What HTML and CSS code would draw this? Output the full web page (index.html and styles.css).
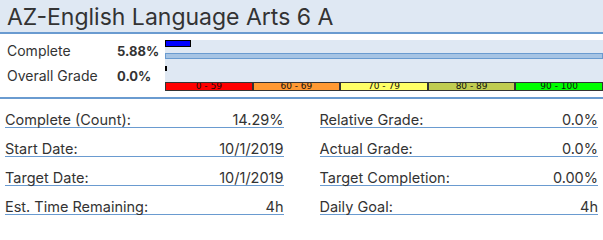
FILE: index.html
```html
<!DOCTYPE html>
<html>
<head>
<meta charset="utf-8">
<link rel="stylesheet" href="styles.css">
</head>
<body>
<div class="card">
  <div class="header">AZ-English Language Arts 6 A</div>
  <div class="summary">
    <div class="summary-labels">
      <div class="srow"><span class="slabel">Complete</span><span class="svalue">5.88%</span></div>
      <div class="srow"><span class="slabel">Overall Grade</span><span class="svalue">0.0%</span></div>
    </div>
    <div class="bars">
      <div class="bar-complete" style="width:5.88%"></div>
      <div class="bar-track"></div>
      <div class="bar-grade"></div>
      <div class="scale">
        <div class="seg seg-red">0 - 59</div>
        <div class="seg seg-orange">60 - 69</div>
        <div class="seg seg-yellow">70 - 79</div>
        <div class="seg seg-olive">80 - 89</div>
        <div class="seg seg-green">90 - 100</div>
      </div>
    </div>
  </div>
  <div class="details">
    <div class="drow"><span>Complete (Count):</span><span>14.29%</span></div>
    <div class="drow"><span>Relative Grade:</span><span>0.0%</span></div>
    <div class="drow"><span>Start Date:</span><span>10/1/2019</span></div>
    <div class="drow"><span>Actual Grade:</span><span>0.0%</span></div>
    <div class="drow"><span>Target Date:</span><span>10/1/2019</span></div>
    <div class="drow"><span>Target Completion:</span><span>0.00%</span></div>
    <div class="drow"><span>Est. Time Remaining:</span><span>4h</span></div>
    <div class="drow"><span>Daily Goal:</span><span>4h</span></div>
  </div>
</div>
</body>
</html>
```

FILE: styles.css
```css
html, body {
  margin: 0;
  padding: 0;
  background: #ffffff;
}
body {
  font-family: Inter, "Noto Sans", sans-serif;
  color: #333333;
  width: 603px;
  overflow: hidden;
}
.header {
  box-sizing: border-box;
  height: 34px;
  padding: 2px 0 0 7px;
  font-size: 23px;
  line-height: 30px;
  background: #dfe8f3;
  border-bottom: 2px solid #6a9bd0;
  white-space: nowrap;
}
.summary {
  display: flex;
  height: 63px;
  border-bottom: 2px solid #6a9bd0;
}
.summary-labels {
  width: 165px;
  flex: none;
  padding-top: 9px;
  box-sizing: border-box;
}
.srow {
  display: flex;
  align-items: baseline;
  height: 25px;
  font-size: 14px;
  line-height: 16px;
}
.slabel {
  width: 110px;
  padding-left: 7px;
}
.svalue {
  font-size: 13px;
  font-weight: 700;
}
.bars {
  flex: 1;
  margin-top: 6px;
  height: 51px;
  background: #dfe8f3;
  display: flex;
  flex-direction: column;
}
.bar-complete {
  box-sizing: border-box;
  height: 7px;
  background: #0000ff;
  border: 1px solid #000000;
}
.bar-track {
  box-sizing: border-box;
  margin-top: 6px;
  height: 6px;
  background: #a6c4e4;
  border: 1px solid #6a9bd0;
}
.bar-grade {
  box-sizing: border-box;
  margin-top: 7px;
  width: 2px;
  height: 5px;
  background: #000000;
}
.scale {
  margin-top: 11px;
  height: 9px;
  display: flex;
}
.seg {
  flex: 1;
  box-sizing: border-box;
  height: 9px;
  border: 1px solid #333333;
  font-family: "DejaVu Sans", sans-serif;
  font-size: 9px;
  line-height: 7px;
  text-align: center;
  color: #111111;
  overflow: hidden;
}
.seg-red { background: #ff0000; }
.seg-orange { background: #ff9933; }
.seg-yellow { background: #ffff66; }
.seg-olive { background: #c0cc50; }
.seg-green { background: #00ff00; }
.details {
  display: grid;
  grid-template-columns: 1fr 1fr;
  column-gap: 36px;
  padding: 0 5px;
}
.drow {
  box-sizing: border-box;
  height: 29px;
  padding-top: 11.5px;
  display: flex;
  justify-content: space-between;
  font-size: 14.5px;
  line-height: 17px;
  border-bottom: 1px solid #6a9bd0;
}
```
